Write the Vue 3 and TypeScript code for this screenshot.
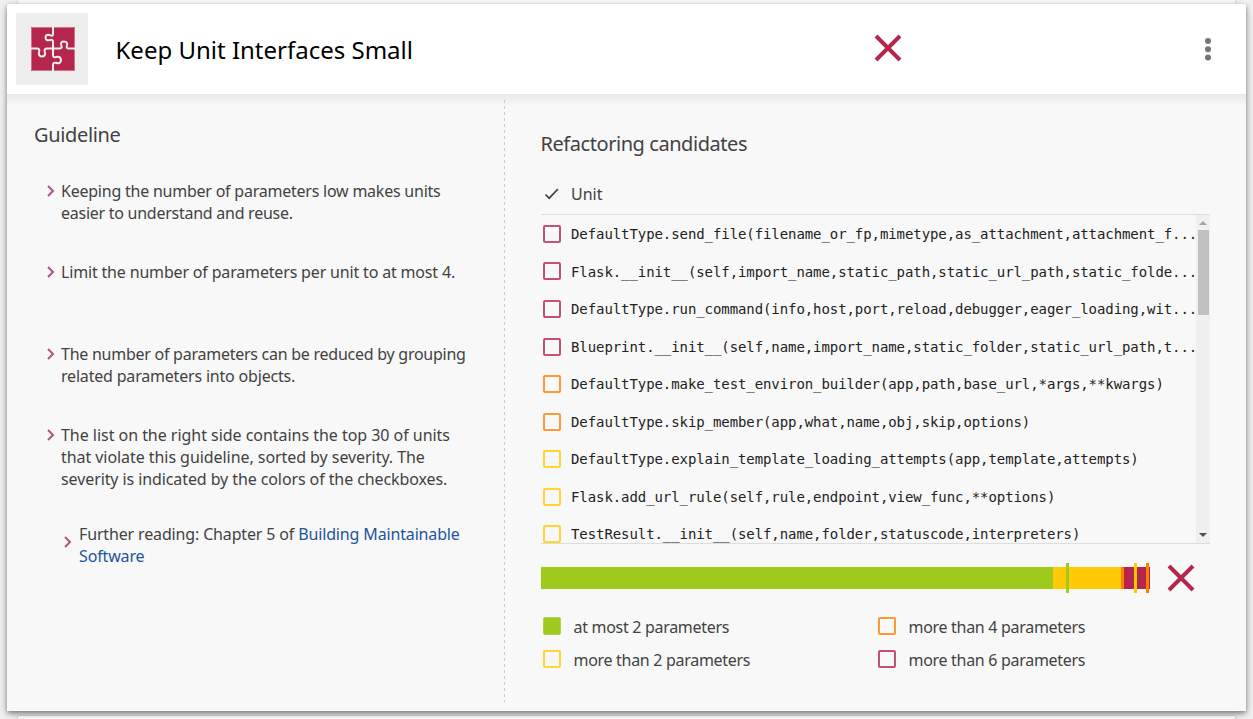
<script setup lang="ts">
type Severity = 'green' | 'yellow' | 'orange' | 'red'

interface Line {
  text: string
  link?: string
  spacing: number
}

interface Guideline {
  id: string
  lines: Line[]
  nested?: boolean
}

const guidelines: Guideline[] = [
  {
    id: 'g1',
    lines: [
      { text: 'Keeping the number of parameters low makes units', spacing: -0.23 },
      { text: 'easier to understand and reuse.', spacing: -0.26 },
    ],
  },
  { id: 'g2', lines: [{ text: 'Limit the number of parameters per unit to at most 4.', spacing: -0.17 }] },
  {
    id: 'g3',
    lines: [
      { text: 'The number of parameters can be reduced by grouping', spacing: -0.255 },
      { text: 'related parameters into objects.', spacing: -0.19 },
    ],
  },
  {
    id: 'g4',
    lines: [
      { text: 'The list on the right side contains the top 30 of units', spacing: -0.035 },
      { text: 'that violate this guideline, sorted by severity. The', spacing: -0.06 },
      { text: 'severity is indicated by the colors of the checkboxes.', spacing: -0.095 },
    ],
  },
  {
    id: 'g5',
    nested: true,
    lines: [
      { text: 'Further reading: Chapter 5 of ', link: 'Building Maintainable', spacing: -0.15 },
      { text: '', link: 'Software', spacing: -0.15 },
    ],
  },
]

const units: { name: string; severity: Severity }[] = [
  { name: 'DefaultType.send_file(filename_or_fp,mimetype,as_attachment,attachment_f...', severity: 'red' },
  { name: 'Flask.__init__(self,import_name,static_path,static_url_path,static_folde...', severity: 'red' },
  { name: 'DefaultType.run_command(info,host,port,reload,debugger,eager_loading,wit...', severity: 'red' },
  { name: 'Blueprint.__init__(self,name,import_name,static_folder,static_url_path,t...', severity: 'red' },
  { name: 'DefaultType.make_test_environ_builder(app,path,base_url,*args,**kwargs)', severity: 'orange' },
  { name: 'DefaultType.skip_member(app,what,name,obj,skip,options)', severity: 'orange' },
  { name: 'DefaultType.explain_template_loading_attempts(app,template,attempts)', severity: 'yellow' },
  { name: 'Flask.add_url_rule(self,rule,endpoint,view_func,**options)', severity: 'yellow' },
  { name: 'TestResult.__init__(self,name,folder,statuscode,interpreters)', severity: 'yellow' },
]

const segments: { severity: Severity; width: number }[] = [
  { severity: 'green', width: 512 },
  { severity: 'yellow', width: 68 },
  { severity: 'orange', width: 3 },
  { severity: 'red', width: 26 },
]

const markers: { severity: Severity; at: number }[] = [
  { severity: 'green', at: 525 },
  { severity: 'yellow', at: 593 },
  { severity: 'orange', at: 605 },
]

const legend: { label: string; severity: Severity; filled?: boolean }[] = [
  { label: 'at most 2 parameters', severity: 'green', filled: true },
  { label: 'more than 4 parameters', severity: 'orange' },
  { label: 'more than 2 parameters', severity: 'yellow' },
  { label: 'more than 6 parameters', severity: 'red' },
]
</script>

<template>
  <div class="page">
    <div class="sheet above"></div>
    <main class="card">
      <header class="head">
        <div class="badge">
          <svg width="44" height="44" viewBox="0 0 44 44">
            <rect width="44" height="44" fill="#b5264c" />
            <path d="M.5 .5H43.5V43.5H.5Z" fill="none" stroke="#d0718a" />
            <path
              d="M22 0V7Q22 9.500 19.500 8.300C15.500 6.500 14.500 9 14.500 10.500C14.500 12.500 16 14 19 13Q22 12 22 15V28Q22 31 25 30C28.500 29 30 31 30 33C30 35.500 28 37 25 35.800Q22 35 22 38V44M0 21.500H6Q9 21.500 8.200 24.500C7 28 9 29.500 11 29.500C13 29.500 15 28 13.700 24.500Q13 21.500 16 21.500H28Q31.500 21.500 30.500 19C29 15.500 31 14.500 33 14.500C35.500 14.500 37 16 35.800 19Q35 21.500 38 21.500H44"
              fill="none" stroke="#f1eeef" stroke-width="2"
            />
          </svg>
        </div>
        <h1 class="title">Keep Unit Interfaces Small</h1>
        <svg class="cross" width="28" height="28" viewBox="0 0 28 28"><path d="M2 2L26 26M26 2L2 26" /></svg>
        <svg class="dots" width="8" height="24" viewBox="0 0 8 24">
          <circle cx="4" cy="4" r="3" /><circle cx="4" cy="12.200" r="3" /><circle cx="4" cy="20.500" r="3" />
        </svg>
      </header>

      <div class="body">
        <section class="left">
          <h2 class="h-guide">Guideline</h2>
          <ul class="guides">
            <li v-for="g in guidelines" :key="g.id" :class="[g.id, { nested: g.nested }]">
              <svg class="chev" width="8" height="12" viewBox="0 0 8 12"><path d="M1 1L6 6L1 11" /></svg>
              <p>
                <span v-for="(l, i) in g.lines" :key="i" class="line" :style="{ letterSpacing: l.spacing + 'px' }">{{ l.text }}<a v-if="l.link">{{ l.link }}</a></span>
              </p>
            </li>
          </ul>
        </section>

        <section class="right">
          <h2 class="h-ref">Refactoring candidates</h2>
          <div class="thead">
            <svg width="16" height="14" viewBox="0 0 16 14"><path d="M1.500 7.500L5.200 11.200L14 2" /></svg>
            <span>Unit</span>
          </div>
          <div class="list">
            <div class="scroll">
              <svg width="8" height="4" viewBox="0 0 8 4"><path d="M0 4L4 0L8 4Z" fill="#a3a3a3" /></svg>
              <div class="thumb"></div>
              <svg class="down" width="8" height="4" viewBox="0 0 8 4"><path d="M0 0H8L4 4Z" fill="#505050" /></svg>
            </div>
            <div class="rows">
              <div v-for="u in units" :key="u.name" class="row">
                <i class="box" :class="u.severity"></i>
                <span class="code">{{ u.name }}</span>
              </div>
            </div>
          </div>
          <div class="rating">
            <div class="bar">
              <i v-for="s in segments" :key="s.severity" :class="['seg', 'fill-' + s.severity]" :style="{ width: s.width + 'px' }"></i>
              <i v-for="m in markers" :key="m.severity" :class="['marker', 'fill-' + m.severity]" :style="{ left: m.at + 'px' }"></i>
            </div>
            <svg class="cross" width="28" height="28" viewBox="0 0 28 28"><path d="M2 2L26 26M26 2L2 26" /></svg>
          </div>
          <div class="legend">
            <div v-for="l in legend" :key="l.label" class="entry">
              <i class="box" :class="[l.severity, { filled: l.filled }]"></i>
              <span>{{ l.label }}</span>
            </div>
          </div>
        </section>
      </div>
    </main>
    <div class="sheet below"></div>
  </div>
</template>

<style>
body { background: #eee; overflow: hidden; }
</style>

<style scoped>
* { box-sizing: border-box; }
.page {
  width: 1253px; height: 719px; overflow: hidden; background: #f1f1f1;
  display: flex; flex-direction: column; color: #424242;
  font-family: "Noto Sans", sans-serif; font-size: 16px; line-height: 22px;
}
.sheet { margin: 0 18px; flex: none; box-shadow: 0 0 2px rgba(0, 0, 0, .3); }
.above { height: 4px; background: #fafafa; }
.below { height: 10px; margin-top: 5px; background: #fff; }
.card {
  position: relative; flex: none; width: 1239px; height: 707px; margin-left: 7px;
  background: #f8f8f8; border-radius: 2px;
  box-shadow: 0 2px 4px rgba(0, 0, 0, .35), 0 3px 10px rgba(0, 0, 0, .25);
}
.head {
  height: 90px; background: #fff; border-radius: 2px 2px 0 0;
  display: flex; align-items: center; padding: 0 34px 0 9px;
}
.badge { width: 72px; height: 72px; padding-left: 1px; background: #eee; display: grid; place-items: center; flex: none; }
.badge svg { margin-left: 1px; }
.title { margin: 2px 0 0 27.5px; width: 758.5px; font-size: 24px; font-weight: 400; line-height: 32px; color: #000; white-space: nowrap; }
.cross { flex: none; fill: none; stroke: #b5264c; stroke-width: 3.900; }
.head .cross { margin-top: -2px; }
.dots { margin: 0 0 0 auto; fill: #757575; }
.body {
  height: 617px; display: flex;
  background: linear-gradient(#e9e9e9, #f8f8f8 12px);
}
h2 { margin: 0; font-size: 20px; font-weight: 400; line-height: 28px; white-space: nowrap; }
.h-guide { letter-spacing: -.35px; }
.left { width: 498px; padding: 27px 0 0 27px; background: repeating-linear-gradient(#ccc 0 3px, transparent 3px 6px) 497px 6px / 1px 602px no-repeat; }
.guides { list-style: none; margin: 0; padding: 31px 0 0 12px; }
.guides li { display: flex; align-items: flex-start; }
.guides p { margin: 0; }
.line { display: block; white-space: nowrap; height: 22px; }
.chev { flex: none; margin: 5px 6px 0 1px; fill: none; stroke: #a9587e; stroke-width: 2; }
.guides .g2 { margin-top: 37px; }
.guides .g3 { margin-top: 60px; }
.guides .g4 { margin-top: 37px; }
.guides .g5 { margin-top: 33px; padding-left: 17px; }
.g5 .chev { margin-top: 13px; margin-right: 7px; }
a { color: #23539b; }
.right { padding: 36px 0 0 36px; width: 705px; }
.thead { height: 57px; padding: 15px 0 0 3px; display: flex; align-items: center; border-bottom: 1px solid #ddd; }
.h-ref { height: 28px; margin-left: -.5px; letter-spacing: -.44px; }
.thead svg { fill: none; stroke: #424242; stroke-width: 1.700; margin-right: 11px; }
.list { height: 329px; display: flex; flex-direction: row-reverse; border-bottom: 1px solid #ddd; overflow: hidden; }
.rows { width: 655px; padding-top: .1px; }
.row { height: 37.56px; display: flex; align-items: center; padding-left: 2px; }
.box { flex: none; width: 18px; height: 18px; border: 2px solid; border-radius: 2px; }
.box.red { border-color: #c45172; }
.box.orange { border-color: #ff9933; }
.box.yellow { border-color: #ffd433; }
.box.green { border-color: #b1d34a; }
.box.filled { border-width: 1px; background: #9fc91c; }
.code { margin: .3px 0 0 10px; font-family: "DejaVu Sans Mono", monospace; font-size: 14px; letter-spacing: -.08px; color: #222; white-space: nowrap; }
.scroll { width: 14px; background: #f0f0f0; display: flex; flex-direction: column; align-items: center; padding: 6px 0; }
.scroll svg { flex: none; }
.thumb { width: 11px; height: 85px; margin-top: 5px; background: #c1c1c1; }
.down { margin-top: auto; }
.rating { height: 68px; display: flex; align-items: center; }
.bar { position: relative; display: flex; width: 609px; height: 22px; margin-right: 17px; }
.marker { position: absolute; top: -4px; width: 3px; height: 30px; }
.fill-green { background: #9fc91c; }
.fill-yellow { background: #ffca05; }
.fill-orange { background: #ff8000; }
.fill-red { background: #b5264c; }
.legend { display: grid; grid-template-columns: 335px 335px; grid-auto-rows: 33px; padding-left: 2px; }
.entry { display: flex; align-items: center; height: 28px; }
.entry span { margin: 2px 0 0 12.5px; letter-spacing: -.3px; white-space: nowrap; }
</style>
